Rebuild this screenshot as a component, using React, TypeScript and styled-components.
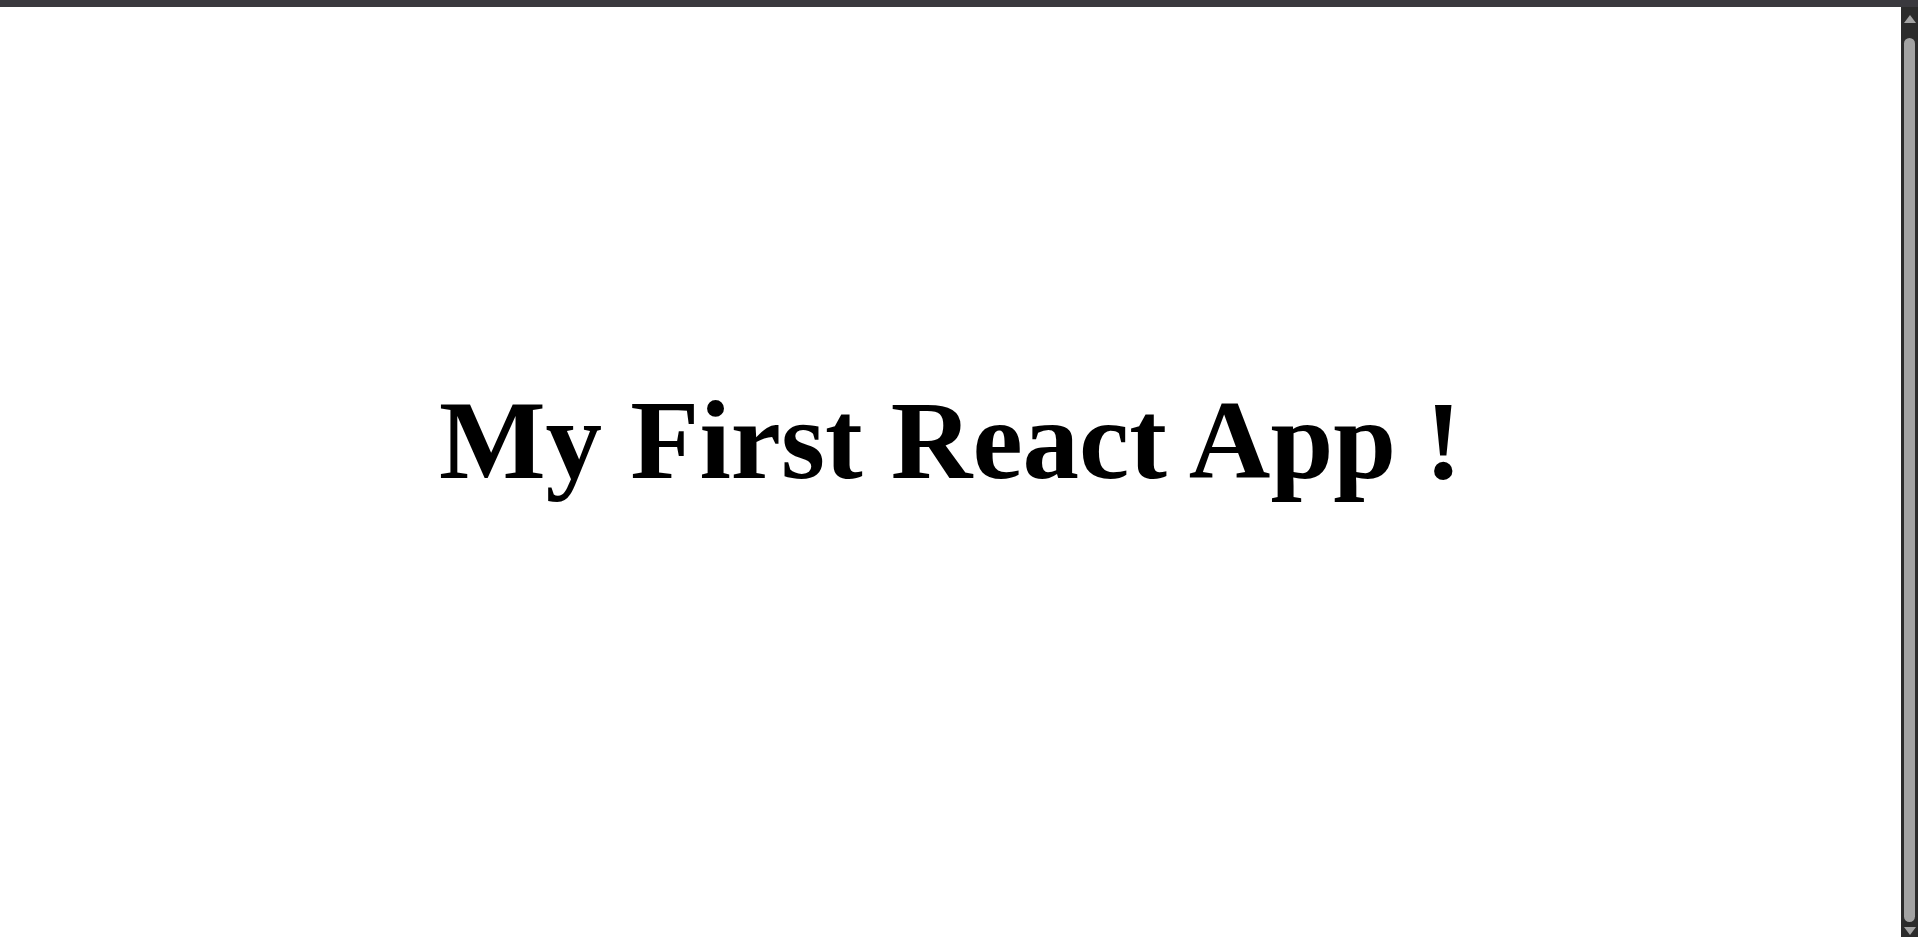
import React from 'react';
import styled, { createGlobalStyle } from 'styled-components';

const GlobalStyle = createGlobalStyle`
  html, body {
    margin: 0;
    padding: 0;
    height: 100%;
    overflow: hidden;
    background: #ffffff;
  }
`;

const Shell = styled.div`
  display: flex;
  flex-direction: column;
  height: 100vh;
`;

const TopBar = styled.div`
  flex: 0 0 7px;
  background: #3a393e;
`;

const Body = styled.div`
  flex: 1;
  display: flex;
  min-height: 0;
`;

const Page = styled.main`
  flex: 1;
  padding: 368px 8px 0;
  display: flex;
  justify-content: center;
  align-items: flex-start;
  background: #ffffff;
`;

const Title = styled.h1`
  margin: 0;
  font-family: "Liberation Serif", "Times New Roman", serif;
  font-weight: 700;
  font-size: 113px;
  line-height: normal;
  color: #000000;
  white-space: nowrap;
`;

const ScrollTrack = styled.div`
  flex: 0 0 17px;
  display: flex;
  flex-direction: column;
  align-items: center;
  background: #2b2b2b;
`;

const Arrow = styled.div<{ $down?: boolean }>`
  flex: 0 0 ${p => (p.$down ? '10px' : '23px')};
  display: flex;
  align-items: ${p => (p.$down ? 'flex-start' : 'center')};
  justify-content: center;

  &::before {
    content: '';
    width: 0;
    height: 0;
    border-left: 6px solid transparent;
    border-right: 6px solid transparent;
    ${p => (p.$down ? 'border-top: 8px solid #a3a3a3;' : 'border-bottom: 8px solid #a3a3a3;')}
  }
`;

const Thumb = styled.div`
  flex: 1;
  width: 11px;
  margin: 8px 0 5px;
  border-radius: 6px;
  background: #a3a3a3;
`;

export default function App() {
  return (
    <>
      <GlobalStyle />
      <Shell>
        <TopBar />
        <Body>
          <Page>
            <Title>My First React App !</Title>
          </Page>
          <ScrollTrack>
            <Arrow />
            <Thumb />
            <Arrow $down />
          </ScrollTrack>
        </Body>
      </Shell>
    </>
  );
}
